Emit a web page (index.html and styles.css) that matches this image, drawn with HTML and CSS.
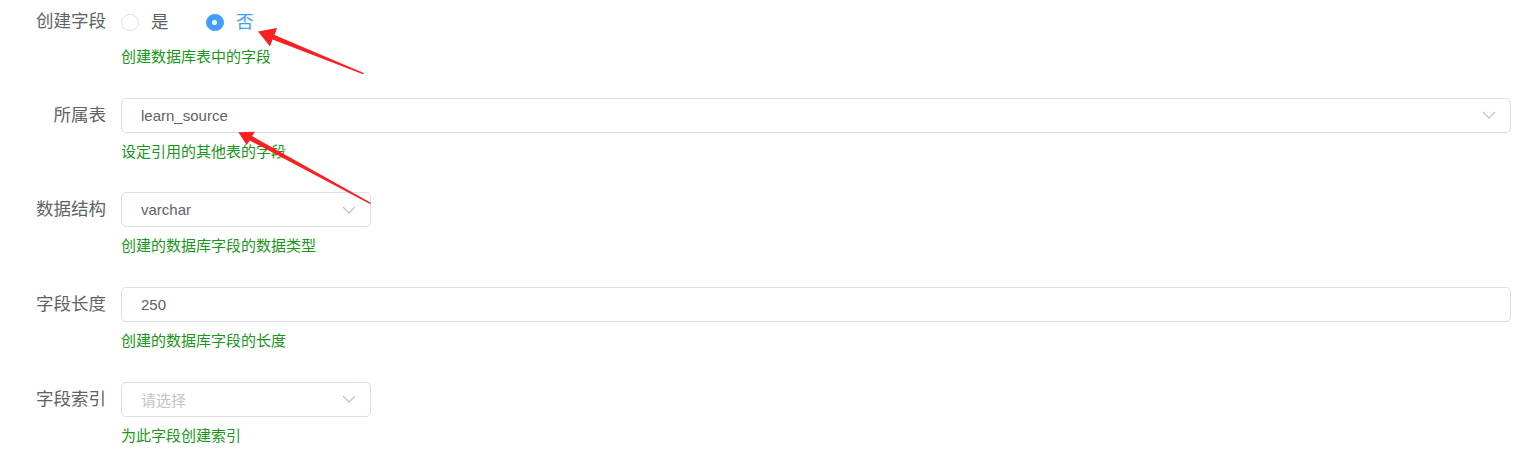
FILE: index.html
```html
<!DOCTYPE html>
<html lang="zh-CN">
<head>
<meta charset="utf-8">
<title>字段设置</title>
<link rel="stylesheet" href="styles.css">
</head>
<body>
<div class="form">
  <div class="item item-radio">
    <label class="label">创建字段</label>
    <div class="content">
      <div class="radios">
        <span class="radio"><span class="dot"></span><span class="rtext">是</span></span>
        <span class="radio checked"><span class="dot"></span><span class="rtext">否</span></span>
      </div>
      <div class="hint">创建数据库表中的字段</div>
    </div>
  </div>

  <div class="item">
    <label class="label">所属表</label>
    <div class="content">
      <div class="input select">
        <span class="value">learn_source</span>
        <svg class="chevron" width="14" height="8" viewBox="0 0 14 8"><path d="M1 1 L7 7 L13 1" fill="none" stroke="#c0c4cc" stroke-width="1.3"/></svg>
      </div>
      <div class="hint">设定引用的其他表的字段</div>
    </div>
  </div>

  <div class="item">
    <label class="label">数据结构</label>
    <div class="content">
      <div class="input select short">
        <span class="value">varchar</span>
        <svg class="chevron" width="14" height="8" viewBox="0 0 14 8"><path d="M1 1 L7 7 L13 1" fill="none" stroke="#c0c4cc" stroke-width="1.3"/></svg>
      </div>
      <div class="hint">创建的数据库字段的数据类型</div>
    </div>
  </div>

  <div class="item">
    <label class="label">字段长度</label>
    <div class="content">
      <div class="input">
        <span class="value">250</span>
      </div>
      <div class="hint">创建的数据库字段的长度</div>
    </div>
  </div>

  <div class="item">
    <label class="label">字段索引</label>
    <div class="content">
      <div class="input select short">
        <span class="value placeholder">请选择</span>
        <svg class="chevron" width="14" height="8" viewBox="0 0 14 8"><path d="M1 1 L7 7 L13 1" fill="none" stroke="#c0c4cc" stroke-width="1.3"/></svg>
      </div>
      <div class="hint">为此字段创建索引</div>
    </div>
  </div>
</div>

<svg class="arrows" width="1521" height="469" viewBox="0 0 1521 469">
  <polygon points="258,31.5 277,28 274.5,35 363.8,73 363,74.2 272.5,39.6 270,46.5" fill="#fa2020"/>
  <polygon points="238.3,132.3 255,131.7 252,136.1 370.8,202.8 370,204 249.7,140.6 246.7,145" fill="#fa2020"/>
</svg>
</body>
</html>
```

FILE: styles.css
```css
html, body {
  margin: 0;
  padding: 0;
  background: #ffffff;
}

body {
  font-family: "Liberation Sans", "Noto Sans CJK SC", sans-serif;
  position: relative;
  width: 1521px;
  height: 469px;
  overflow: hidden;
}

.form {
  padding: 4px 10px 0 0;
}

.item {
  display: flex;
  margin-bottom: 30.75px;
}

.item-radio {
  margin-bottom: 31px;
}

.label {
  flex: none;
  width: 121px;
  box-sizing: border-box;
  padding-right: 15px;
  text-align: right;
  font-size: 17.5px;
  line-height: 35px;
  color: #606266;
}

.content {
  flex: 1;
  min-width: 0;
}

.hint {
  font-size: 15px;
  line-height: 20px;
  margin-top: 9px;
  color: #1a961a;
}

.item-radio .hint {
  margin-top: 7.5px;
}

.radios {
  display: flex;
  align-items: center;
  height: 35px;
  padding-top: 2px;
  box-sizing: border-box;
}

.radio {
  display: flex;
  align-items: center;
  margin-right: 37.5px;
  font-size: 17.5px;
  line-height: 1;
  color: #606266;
}

.dot {
  width: 17.5px;
  height: 17.5px;
  box-sizing: border-box;
  border: 1px solid #dcdfe6;
  border-radius: 50%;
  background: #ffffff;
  margin-right: 12.5px;
  display: flex;
  align-items: center;
  justify-content: center;
}

.radio.checked .dot {
  background: #409eff;
  border-color: #409eff;
}

.radio.checked .dot::after {
  content: "";
  width: 5px;
  height: 5px;
  border-radius: 50%;
  background: #ffffff;
}

.radio.checked .rtext {
  color: #409eff;
}

.input {
  height: 35px;
  box-sizing: border-box;
  border: 1px solid #dcdfe6;
  border-radius: 5px;
  display: flex;
  align-items: center;
  padding: 0 14px 0 19px;
  font-size: 15px;
  color: #606266;
  background: #ffffff;
}

.input.short {
  width: 250px;
}

.value {
  flex: 1;
  white-space: nowrap;
}

.placeholder {
  color: #c0c4cc;
}

.chevron {
  flex: none;
  display: block;
}

.arrows {
  position: absolute;
  left: 0;
  top: 0;
  pointer-events: none;
}
```
